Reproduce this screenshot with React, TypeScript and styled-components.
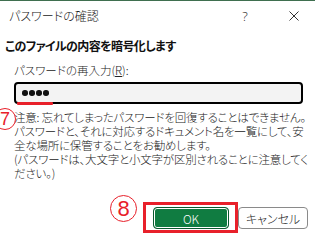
import React from "react";
import styled, { createGlobalStyle } from "styled-components";

const Global = createGlobalStyle`
  html, body { margin: 0; padding: 0; background: #ffffff; }
  body { width: 315px; height: 239px; overflow: hidden; }
  * { box-sizing: border-box; }
`;

const FONT = `"Noto Sans CJK JP", "Noto Sans", sans-serif`;

const Dialog = styled.div`
  position: relative;
  width: 315px;
  height: 239px;
  border-top: 1px solid #3f6f4f;
  font-family: ${FONT};
  font-feature-settings: "palt" 1;
  color: #1a1a1a;
  display: flex;
  flex-direction: column;
`;

const TitleBar = styled.div`
  height: 30px;
  display: flex;
  align-items: center;
  padding-left: 9px;
`;

const Title = styled.div`
  flex: 1;
  font-size: 12px;
  font-weight: 300;
  color: #222;
  line-height: 14px;
`;

const TitleButton = styled.div<{ $w: number }>`
  width: ${(p) => p.$w}px;
  display: flex;
  justify-content: center;
  font-family: "Noto Sans", sans-serif;
  font-size: 13px;
  font-weight: 300;
  color: #333;
`;

const Body = styled.div`
  padding: 7px 8px 0 5px;
  display: flex;
  flex-direction: column;
`;

const Heading = styled.div`
  font-size: 12px;
  letter-spacing: -0.6px;
  font-weight: 700;
  line-height: 16px;
  color: #111;
`;

const Indent = styled.div`
  padding-left: 9px;
  padding-right: 4px;
  display: flex;
  flex-direction: column;
`;

const Label = styled.div`
  margin-top: 9px;
  font-size: 11.5px;
  line-height: 14px;
  font-weight: 300;
  color: #222;
  u { text-decoration: underline; text-underline-offset: 1px; }
`;

const Field = styled.div`
  position: relative;
  margin-top: 5px;
  height: 22px;
  border: 2px solid #000;
  border-radius: 4px;
  background: #f3f3f3;
  display: flex;
  align-items: center;
  padding-left: 6px;
`;

const Dots = styled.div`
  display: flex;
  gap: 1.5px;
`;

const Dot = styled.span`
  width: 5.5px;
  height: 5.5px;
  border-radius: 50%;
  background: #111;
`;

const RedUnderline = styled.div`
  position: absolute;
  left: 1px;
  bottom: -3px;
  width: 36px;
  height: 3px;
  background: #e8202a;
  border-radius: 1px;
`;

const Notes = styled.div`
  margin-top: 6px;
  font-size: 11.5px;
  letter-spacing: -0.2px;
  font-weight: 300;
  color: #222;
`;

const NoteLine = styled.div`
  white-space: nowrap;
  height: 14px;
  line-height: 14px;
`;

const Footer = styled.div`
  margin-top: auto;
  height: 32px;
  display: flex;
  justify-content: flex-end;
  align-items: flex-start;
  padding-right: 7px;
  gap: 9px;
`;

const Button = styled.button<{ $primary?: boolean }>`
  width: ${(p) => (p.$primary ? 76 : 70)}px;
  height: 22px;
  flex: none;
  border-radius: 4px;
  font-family: ${FONT};
  font-feature-settings: "palt" 1;
  font-size: 12px;
  font-weight: 300;
  display: flex;
  align-items: center;
  justify-content: center;
  padding: 0;
  border: 1px solid ${(p) => (p.$primary ? "#0b5a2f" : "#8a8a8a")};
  background: ${(p) => (p.$primary ? "#107c41" : "#ffffff")};
  color: ${(p) => (p.$primary ? "#ffffff" : "#1a1a1a")};
  box-shadow: ${(p) => (p.$primary ? "inset 0 0 0 1px #ffffff" : "none")};
`;

const Highlight = styled.div`
  position: relative;
  &::after {
    content: "";
    position: absolute;
    left: -10px;
    top: -5px;
    right: -9px;
    bottom: -4px;
    border: 3px solid #e8202a;
    pointer-events: none;
  }
`;

const Badge = styled.div<{ $x: number; $y: number; $size: number }>`
  position: absolute;
  left: ${(p) => p.$x}px;
  top: ${(p) => p.$y}px;
  width: ${(p) => p.$size}px;
  height: ${(p) => p.$size}px;
  border: 1.5px solid #e8202a;
  border-radius: 50%;
  color: #e8202a;
  font-family: "Liberation Sans", Arial, sans-serif;
  font-size: ${(p) => Math.round(p.$size * 0.8)}px;
  line-height: 1;
  display: flex;
  align-items: center;
  justify-content: center;
  background: rgba(255, 255, 255, 0.6);
`;

const notes = [
  "注意: 忘れてしまったパスワードを回復することはできません。",
  "パスワードと、それに対応するドキュメント名を一覧にして、安",
  "全な場所に保管することをお勧めします。",
  "(パスワードは、大文字と小文字が区別されることに注意してく",
  "ださい。)",
];

export default function App() {
  return (
    <>
      <Global />
      <Dialog>
        <TitleBar>
          <Title>パスワードの確認</Title>
          <TitleButton $w={56}>?</TitleButton>
          <TitleButton $w={42}>
            <svg width="10" height="10" viewBox="0 0 10 10">
              <path d="M0.5 0.5 L9.5 9.5 M9.5 0.5 L0.5 9.5" stroke="#333" strokeWidth="1" fill="none" />
            </svg>
          </TitleButton>
        </TitleBar>
        <Body>
          <Heading>このファイルの内容を暗号化します</Heading>
          <Indent>
            <Label>
              パスワードの再入力(<u>R</u>):
            </Label>
            <Field>
              <Dots>
                <Dot />
                <Dot />
                <Dot />
                <Dot />
              </Dots>
              <RedUnderline />
            </Field>
            <Notes>
              {notes.map((line) => (
                <NoteLine key={line}>{line}</NoteLine>
              ))}
            </Notes>
          </Indent>
        </Body>
        <Footer>
          <Highlight>
            <Button $primary>OK</Button>
          </Highlight>
          <Button>キャンセル</Button>
        </Footer>
        <Badge $x={-6} $y={107} $size={22}>7</Badge>
        <Badge $x={110} $y={194} $size={27}>8</Badge>
      </Dialog>
    </>
  );
}
